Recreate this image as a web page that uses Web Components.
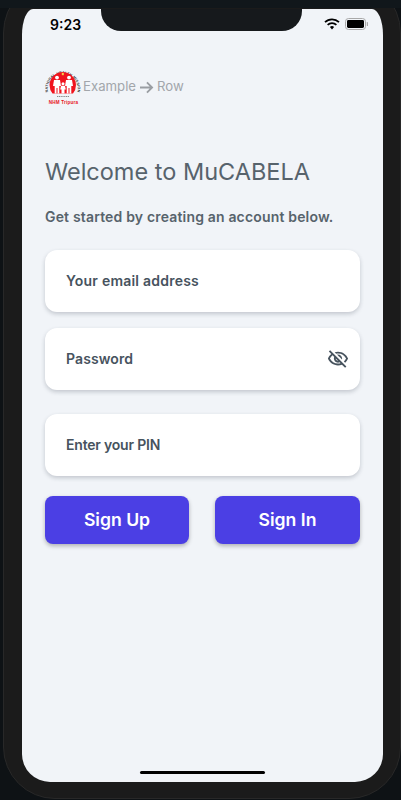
<!DOCTYPE html>
<html lang="en">
<head>
<meta charset="utf-8">
<title>MuCABELA</title>
<style>
  html, body { margin: 0; height: 800px; overflow: hidden; background: #0e1215; }
  body { font-family: "Inter", "Liberation Sans", sans-serif; }
</style>
</head>
<body>
<phone-frame>
  <signup-form></signup-form>
</phone-frame>

<script>
;(function () {
  "use strict"

  class PhoneFrame extends HTMLElement {
    constructor() {
      super()
      this.attachShadow({ mode: "open" }).innerHTML = `<style>
        :host { display: block; position: relative; width: 401px; height: 800px; overflow: hidden; }
        .body { width: 398px; height: 821px; margin: -22px 0 0 3px; box-sizing: border-box; padding: 30px 17px 0 18px;
          background: #1b1b1b; border: 1px solid #282828; border-radius: 55px 55px 52px 52px; }
        .band { position: absolute; top: 0; left: 0; right: 0; height: 8px; background: #11171b; }
        .screen { position: relative; height: 773px; background: #f1f4f8; overflow: hidden;
          border-radius: 11px 11px 28px 28px / 26px 26px 28px 28px;
          display: flex; flex-direction: column; }
        .notch { position: absolute; top: 0; left: 79px; width: 201px; height: 22px; background: #16191c;
          border-radius: 0 0 20px 20px; }
        .status { display: flex; align-items: center; justify-content: space-between; height: 30px; padding: 0 15px 0 28px; flex: none; }
        .time { font: 600 14px "Inter", sans-serif; color: #000; }
        .icons { display: flex; align-items: center; gap: 5px; }
        .icons svg { display: block; }
        .home { position: absolute; left: 118px; bottom: 8px; width: 125px; height: 3px; border-radius: 2px; background: #000; }
      </style>
      <div class="band"></div>
      <div class="body"><div class="screen">
        <div class="status">
          <span class="time">9:23</span>
          <span class="icons">
            <svg width="16" height="12" viewBox="0 0 16 12" fill="none" stroke="#000" stroke-width="1.7">
              <path d="M1 4.2a10 10 0 0 1 14 0"/><path d="M3.6 6.8a6.4 6.4 0 0 1 8.8 0"/><path d="M8 11.4 5.9 9.1a3 3 0 0 1 4.2 0z" fill="#000" stroke="none"/>
            </svg>
            <svg width="23" height="12" viewBox="0 0 23 12">
              <rect x=".5" y=".5" width="20" height="11" rx="3" fill="none" stroke="#a9a9a9"/>
              <rect x="2" y="2" width="17" height="8" rx="1.4" fill="#000"/>
              <rect x="21.8" y="4" width="1.2" height="4" rx=".6" fill="#a9a9a9"/>
            </svg>
          </span>
        </div>
        <slot></slot>
        <div class="notch"></div>
        <div class="home"></div>
      </div></div>`
    }
  }
  customElements.define("phone-frame", PhoneFrame)

  class NhmLogo extends HTMLElement {
    constructor() {
      super()
      this.attachShadow({ mode: "open" }).innerHTML = `<style>
        :host { display: block; width: 36px; height: 36px; flex: none; }
        svg { display: block; }
        .ring { font: 700 3.6px "Liberation Sans", sans-serif; fill: #333; letter-spacing: .15px; }
        .nhm { font: 700 4.6px "Liberation Sans", sans-serif; fill: #e8141c; letter-spacing: .2px; }
      </style>
      <svg width="36" height="36" viewBox="0 0 36 36">
        <defs><path id="arc" d="M3.500 24.500A15 15 0 1 1 32 24.500"/></defs>
        <text class="ring"><textPath href="#arc" startOffset="50%" text-anchor="middle">NATIONAL HEALTH MISSION</textPath></text>
        <path d="M7.500 24.500A13.200 13.200 0 1 1 28 24.500z" fill="#f0141e"/>
        <rect x="16.800" y="3.800" width="2" height="2.400" fill="#f5d04a"/>
        <g fill="#fff">
          <circle cx="12" cy="8.600" r="1.900"/><path d="M9 11h6l1 6h-1.700v7.500h-1.800V19h-1v5.500H9.700V17H8z"/>
          <circle cx="24" cy="8.600" r="1.900"/><path d="M21 11h6l1 6h-1.700v7.500h-1.800V19h-1v5.500h-1.800V17H20z"/>
          <circle cx="18" cy="14.800" r="1.500"/><path d="M16 16.800h4l.8 3.700h-1.300v4h-3v-4h-1.300z"/>
        </g>
        <path d="M12 27.500h12" stroke="#8a8a8a" stroke-width="1" stroke-dasharray="1.200 .6"/>
        <text class="nhm" x="18.500" y="34.500" text-anchor="middle">NHM Tripura</text>
      </svg>`
    }
  }
  customElements.define("nhm-logo", NhmLogo)

  class TextField extends HTMLElement {
    constructor() {
      super()
      this.attachShadow({ mode: "open" }).innerHTML = `<style>
        :host { display: flex; align-items: center; height: 62px; box-sizing: border-box; padding: 0 11px 0 21px;
          background: #fff; border-radius: 12px; box-shadow: 0 2px 4px rgba(30, 40, 60, .22);
          font: 600 14px/1 "Inter", sans-serif; color: #47535e; }
        .label { flex: 1; letter-spacing: var(--track, .1px); }
      </style>
      <span class="label"><slot></slot></span>
      <slot name="end"></slot>`
    }
  }
  customElements.define("text-field", TextField)

  class PrimaryButton extends HTMLElement {
    constructor() {
      super()
      this.attachShadow({ mode: "open" }).innerHTML = `<style>
        :host { display: flex; align-items: center; justify-content: center; height: 48px; border-radius: 8px;
          background: #4b3fe4; box-shadow: 0 2px 4px rgba(0, 0, 0, .28);
          font: 600 17.6px/1 "Inter", sans-serif; color: #fff; }
      </style>
      <slot></slot>`
    }
  }
  customElements.define("primary-button", PrimaryButton)

  class SignupForm extends HTMLElement {
    constructor() {
      super()
      this.attachShadow({ mode: "open" }).innerHTML = `<style>
        :host { display: flex; flex-direction: column; padding: 0 23px; }
        .crumb { display: flex; align-items: center; gap: 2px; margin-top: 30px; height: 36px;
          font: 400 13.2px/1 "Inter", sans-serif; color: #a2a6ab; }
        .crumb svg { display: block; margin: 0 1px; }
        h1 { margin: 52px 0 0; font: 400 23.5px/30px "Inter", sans-serif; color: #57636c; }
        p { margin: 20px 0 0; font: 600 14px/20px "Inter", sans-serif; color: #57636c; letter-spacing: .17px; }
        .fields { display: flex; flex-direction: column; margin-top: 23px; }
        text-field + text-field { margin-top: 16px; }
        text-field.email { --track: .22px; }
        text-field.pin { margin-top: 24px; --track: -.2px; }
        .actions { display: grid; grid-template-columns: 144px 145px; justify-content: space-between; margin-top: 20px; }
        .eye { display: block; }
      </style>
      <div class="crumb">
        <nhm-logo></nhm-logo>
        <span>Example</span>
        <svg width="15" height="13" viewBox="0 0 16 14" fill="none" stroke="#9a9ea3" stroke-width="2"><path d="M1 7h13M8.500 1.500 14 7l-5.500 5.500"/></svg>
        <span>Row</span>
      </div>
      <h1>Welcome to MuCABELA</h1>
      <p>Get started by creating an account below.</p>
      <div class="fields">
        <text-field class="email">Your email address</text-field>
        <text-field>Password
          <svg class="eye" slot="end" width="22" height="22" viewBox="0 0 24 24" fill="#47535e">
            <path d="M12 6c3.790 0 7.170 2.130 8.820 5.500-.59 1.220-1.420 2.270-2.410 3.120l1.410 1.410c1.390-1.230 2.490-2.770 3.180-4.530C21.270 7.110 17 4 12 4c-1.270 0-2.490.2-3.640.57l1.650 1.650C10.660 6.090 11.320 6 12 6zm-1.070 1.140L13 9.210c.57.25 1.030.71 1.280 1.280l2.070 2.070c.08-.34.14-.7.14-1.070C16.500 9.010 14.480 7 12 7c-.37 0-.72.05-1.070.14zM2.010 3.870l2.680 2.680C3.060 7.830 1.770 9.530 1 11.500 2.730 15.890 7 19 12 19c1.520 0 2.980-.29 4.320-.82l3.420 3.420 1.410-1.410L3.420 2.450 2.010 3.870zm7.500 7.500l2.610 2.610c-.04.01-.08.02-.12.02-1.380 0-2.500-1.120-2.500-2.500 0-.05.01-.08.01-.13zm-3.400-3.400l1.750 1.750c-.23.55-.36 1.150-.36 1.780 0 2.480 2.020 4.500 4.500 4.500.63 0 1.230-.13 1.770-.36l.98.98c-.88.24-1.800.38-2.750.38-3.790 0-7.170-2.130-8.820-5.500.7-1.430 1.720-2.610 2.930-3.530z"/>
          </svg>
        </text-field>
        <text-field class="pin">Enter your PIN</text-field>
      </div>
      <div class="actions">
        <primary-button>Sign Up</primary-button>
        <primary-button>Sign In</primary-button>
      </div>`
    }
  }
  customElements.define("signup-form", SignupForm)
})()
</script>
</body>
</html>
